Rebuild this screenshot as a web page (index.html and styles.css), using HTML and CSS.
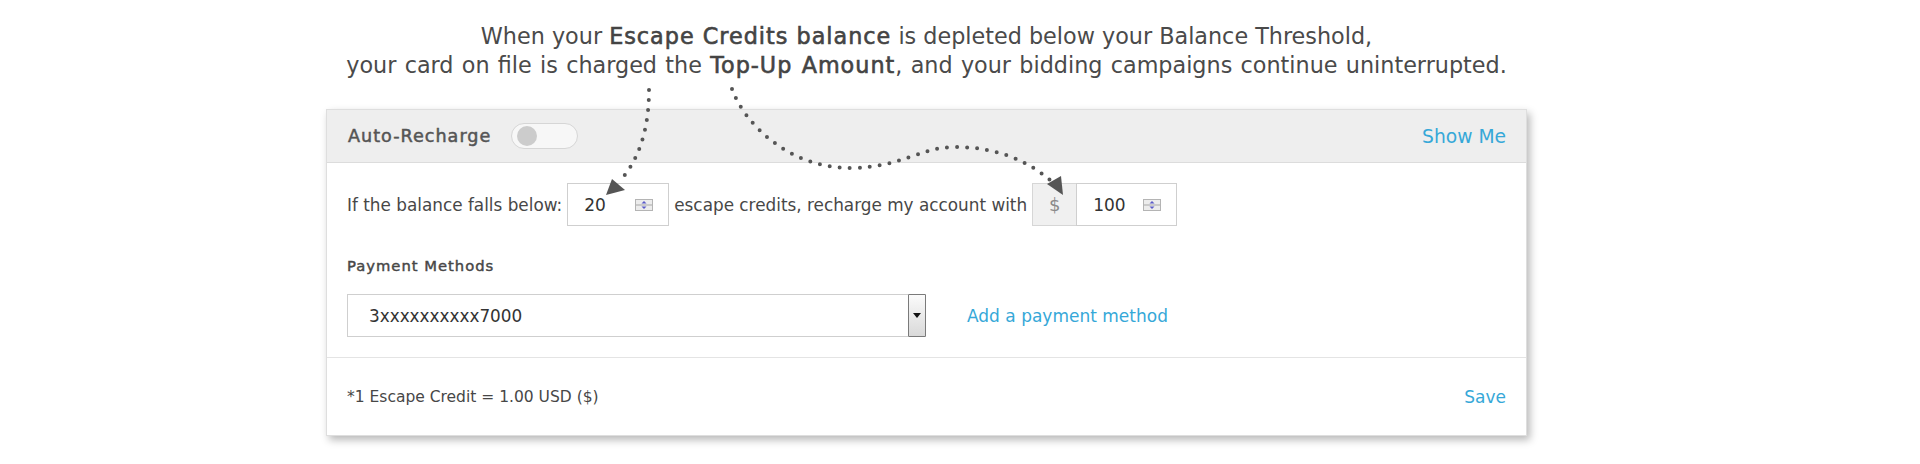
FILE: index.html
```html
<!DOCTYPE html>
<html>
<head>
<meta charset="utf-8">
<link rel="stylesheet" href="styles.css">
</head>
<body>
<div class="page">
  <p class="intro">When your <b>Escape Credits balance</b> is depleted below your Balance Threshold,<br><span class="intro-second">your card on file is charged the <b>Top-Up Amount</b>, and your bidding campaigns continue uninterrupted.</span></p>
  <section class="panel">
    <header class="panel-head">
      <div class="head-left">
        <span class="title">Auto-Recharge</span>
        <span class="toggle"><span class="knob"></span></span>
      </div>
      <a class="link head-link">Show Me</a>
    </header>
    <div class="panel-body">
      <div class="rule-row">
        <span>If the balance falls below:</span>
        <div class="num-input">
          <span>20</span>
          <svg class="spin" width="18" height="12" viewBox="0 0 18 12"><rect x="0.5" y="0.5" width="17" height="11" fill="#ececec" stroke="#b4b4b4"/><line x1="1" y1="6" x2="17" y2="6" stroke="#a8a8a8"/><polygon points="6.5,4.5 11.5,4.5 9,2" fill="#5b5bc8"/><polygon points="6.5,7.5 11.5,7.5 9,10" fill="#5b5bc8"/></svg>
        </div>
        <span>escape credits, recharge my account with</span>
        <div class="money">
          <span class="addon">$</span>
          <div class="num-input joined">
            <span>100</span>
            <svg class="spin" width="18" height="12" viewBox="0 0 18 12"><rect x="0.5" y="0.5" width="17" height="11" fill="#ececec" stroke="#b4b4b4"/><line x1="1" y1="6" x2="17" y2="6" stroke="#a8a8a8"/><polygon points="6.5,4.5 11.5,4.5 9,2" fill="#5b5bc8"/><polygon points="6.5,7.5 11.5,7.5 9,10" fill="#5b5bc8"/></svg>
          </div>
        </div>
      </div>
      <div class="label">Payment Methods</div>
      <div class="pay-row">
        <div class="select">
          <span class="select-value">3xxxxxxxxxx7000</span>
          <span class="select-btn"><svg width="8" height="5" viewBox="0 0 8 5"><polygon points="0,0 8,0 4,5" fill="#111"/></svg></span>
        </div>
        <a class="link">Add a payment method</a>
      </div>
    </div>
    <footer class="panel-foot">
      <span>*1 Escape Credit = 1.00 USD ($)</span>
      <a class="link">Save</a>
    </footer>
  </section>
  <svg class="arrows" width="1920" height="464" viewBox="0 0 1920 464">
    <path d="M649,90 C649,125 641,158 619,182" fill="none" stroke="#555" stroke-width="4" stroke-linecap="round" stroke-dasharray="0 10"/>
    <polygon points="606,195 612,179 625,190" fill="#555"/>
    <path d="M732,89 C745,125 790,168 850,168 C900,168 920,147 955,147 C1000,147 1030,163 1050,180" fill="none" stroke="#555" stroke-width="4" stroke-linecap="round" stroke-dasharray="0 10"/>
    <polygon points="1063,195 1061,176 1047,184" fill="#555"/>
  </svg>
</div>
</body>
</html>
```

FILE: styles.css
```css
html, body {
  margin: 0;
  padding: 0;
  background: #ffffff;
}

body {
  font-family: "DejaVu Sans", "Liberation Sans", sans-serif;
  color: #474747;
}

.page {
  position: relative;
  width: 1920px;
  height: 464px;
  overflow: hidden;
}

.intro {
  margin: 0 0 0 326px;
  width: 1201px;
  padding-top: 22px;
  font-size: 22.3px;
  line-height: 29px;
  text-align: center;
  color: #4a4a4a;
}

.intro-second {
  word-spacing: 1.2px;
}

.intro b {
  font-weight: 400;
  letter-spacing: 1px;
  -webkit-text-stroke: 0.6px #444;
  color: #444;
}

.panel {
  margin: 29px 0 0 326px;
  width: 1199px;
  border: 1px solid #dedede;
  background: #fff;
  box-shadow: 3px 4px 8px rgba(0, 0, 0, 0.28);
}

.panel-head {
  height: 52px;
  background: #eeeeee;
  border-bottom: 1px solid #dcdcdc;
  display: flex;
  align-items: center;
  justify-content: space-between;
  padding: 0 20px 0 21px;
}

.head-left {
  display: flex;
  align-items: center;
  gap: 20px;
}

.title {
  font-size: 17.6px;
  letter-spacing: 1px;
  -webkit-text-stroke: 0.5px #555;
  color: #555;
}

.toggle {
  width: 60px;
  height: 24px;
  border: 1px solid #d6d6d6;
  border-radius: 13px;
  background: #f7f7f7;
  display: flex;
  align-items: center;
  padding-left: 5px;
  box-sizing: content-box;
}

.knob {
  width: 20px;
  height: 20px;
  border-radius: 50%;
  background: #cccccc;
}

.link {
  color: #36a8d8;
  font-size: 17px;
  cursor: pointer;
}

.head-link {
  font-size: 18.7px;
}

.panel-body {
  padding: 20px 20px 20px 20px;
  border-bottom: 1px solid #e4e4e4;
}

.rule-row {
  display: flex;
  align-items: center;
  gap: 5px;
  font-size: 16.85px;
  color: #474747;
}

.num-input {
  border: 1px solid #cfcfcf;
  display: flex;
  align-items: center;
  justify-content: space-between;
  padding: 0 15px 0 16px;
  box-sizing: border-box;
  width: 102px;
  height: 43px;
  font-size: 17px;
  color: #333;
}

.num-input .spin {
  margin-top: 1px;
}

.money {
  display: flex;
}

.addon {
  width: 44px;
  height: 43px;
  box-sizing: border-box;
  border: 1px solid #d6d6d6;
  border-right: none;
  background: #f0f0f0;
  color: #8a8a8a;
  font-size: 18px;
  display: flex;
  align-items: center;
  justify-content: center;
}

.num-input.joined {
  width: 101px;
}

.label {
  margin-top: 30px;
  font-size: 14.75px;
  line-height: 20px;
  letter-spacing: 1px;
  -webkit-text-stroke: 0.45px #474747;
  color: #474747;
}

.pay-row {
  margin-top: 18px;
  display: flex;
  align-items: center;
  gap: 41px;
}

.select {
  width: 579px;
  height: 43px;
  box-sizing: border-box;
  border: 1px solid #cfcfcf;
  border-right: none;
  display: flex;
  align-items: stretch;
  justify-content: space-between;
}

.select-value {
  display: flex;
  align-items: center;
  padding-left: 21px;
  font-size: 16.85px;
  color: #333;
}

.select-btn {
  width: 18px;
  margin: -1px 0;
  box-sizing: border-box;
  border: 1px solid #7a7a7a;
  border-radius: 1px;
  background: linear-gradient(#fbfbfb, #d9d9d9);
  display: flex;
  align-items: center;
  justify-content: center;
}

.panel-foot {
  height: 77px;
  display: flex;
  align-items: center;
  justify-content: space-between;
  padding: 0 20px 0 20px;
  font-size: 15.5px;
  color: #474747;
}

.arrows {
  position: absolute;
  left: 0;
  top: 0;
  pointer-events: none;
}
```
